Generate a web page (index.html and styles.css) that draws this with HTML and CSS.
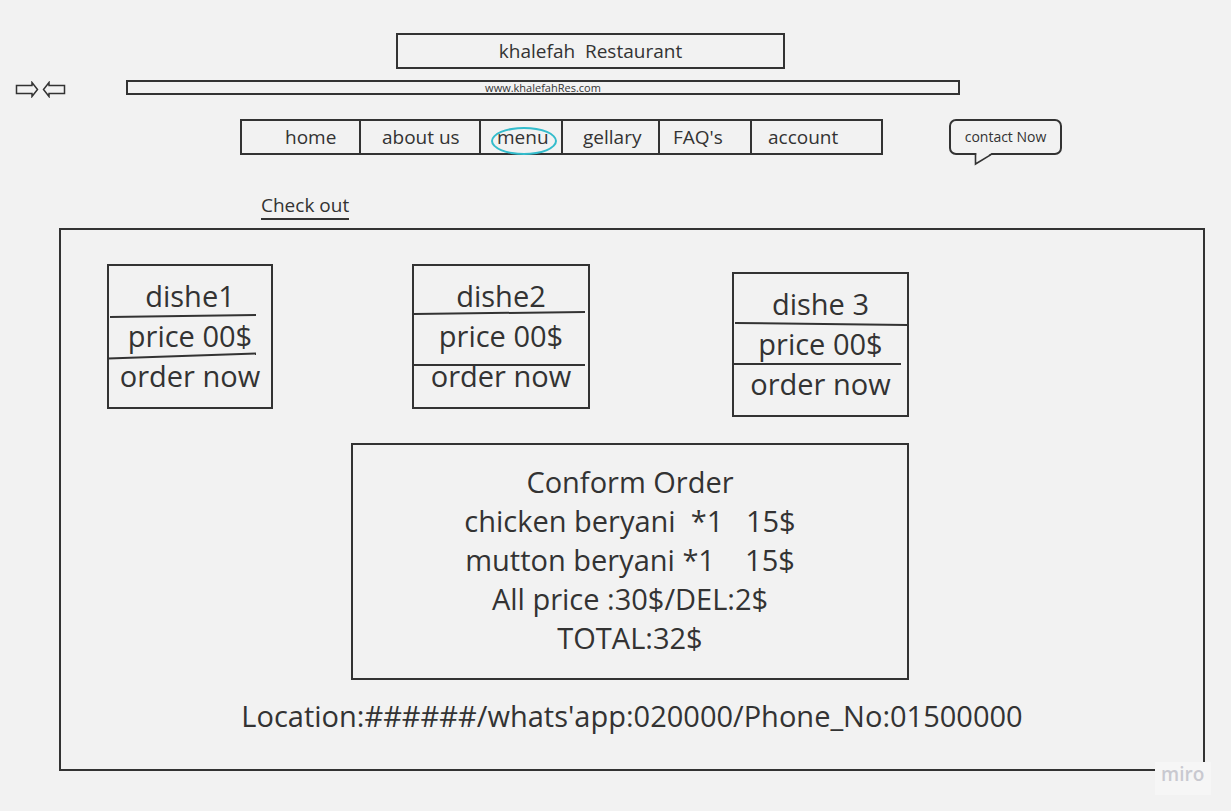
FILE: index.html
```html
<!DOCTYPE html>
<html lang="en">
<head>
    <meta charset="UTF-8">
    <meta name="viewport" content="width=device-width, initial-scale=1.0">
    <title>khalefah Restaurant - Check out</title>
    <link rel="stylesheet" href="styles.css">
</head>
<body>
    <div class="title-box">khalefah  Restaurant</div>

    <div class="address-row">
        <svg class="nav-arrows" width="52" height="17" viewBox="0 0 52 17">
            <path d="M1.5 4.5 H17 V1.5 L22.5 8.5 L17 15.5 V12.5 H1.5 Z"/>
            <path d="M49.5 4.5 H34 V1.5 L28.5 8.5 L34 15.5 V12.5 H49.5 Z"/>
        </svg>
        <div class="address-bar">www.khalefahRes.com</div>
    </div>

    <div class="nav-row">
        <nav class="main-nav">
            <a class="nav-item nav-home">home</a>
            <a class="nav-item nav-about">about us</a>
            <a class="nav-item nav-menu">menu</a>
            <a class="nav-item nav-gallery">gellary</a>
            <a class="nav-item nav-faq">FAQ's</a>
            <a class="nav-item nav-account">account</a>
        </nav>
        <div class="contact-bubble">
            contact Now
            <svg class="bubble-tail" width="20" height="14" viewBox="0 0 20 14">
                <polygon points="2.2,0 17.5,0 2.2,10.5" fill="#f2f2f2"/>
                <polyline points="1.5,0 1.5,11 17,1.6" fill="none" stroke="#333" stroke-width="1.6"/>
            </svg>
        </div>
    </div>

    <div class="checkout-row">
        <span class="checkout-title">Check out</span>
    </div>

    <div class="checkout-frame">
        <div class="dish-row">
            <div class="dish-card dish-one">
                <div class="dish-line">dishe1</div>
                <div class="dish-rule rule-a"></div>
                <div class="dish-line">price 00$</div>
                <div class="dish-rule rule-b"></div>
                <div class="dish-line">order now</div>
            </div>
            <div class="dish-card dish-two">
                <div class="dish-line">dishe2</div>
                <div class="dish-rule rule-c"></div>
                <div class="dish-line">price 00$</div>
                <div class="dish-rule rule-d"></div>
                <div class="dish-line">order now</div>
            </div>
            <div class="dish-card dish-three">
                <div class="dish-line">dishe 3</div>
                <div class="dish-rule rule-e"></div>
                <div class="dish-line">price 00$</div>
                <div class="dish-rule rule-f"></div>
                <div class="dish-line">order now</div>
            </div>
        </div>

        <div class="order-box">
            <div class="order-line">Conform Order</div>
            <div class="order-line">chicken beryani  *1   15$</div>
            <div class="order-line">mutton beryani *1    15$</div>
            <div class="order-line">All price :30$/DEL:2$</div>
            <div class="order-line">TOTAL:32$</div>
        </div>

        <div class="contact-line">Location:######/whats'app:020000/Phone_No:01500000</div>
    </div>

    <div class="miro-badge">miro</div>
</body>
</html>
```

FILE: styles.css
```css
* {
    box-sizing: border-box;
}

body {
    margin: 0;
    width: 1231px;
    height: 811px;
    overflow: hidden;
    position: relative;
    background: #f2f2f2;
    color: #333;
    font-family: "Open Sans", Arial, sans-serif;
}

/* header */

.title-box {
    margin: 33px 0 0 396px;
    width: 389px;
    height: 36px;
    border: 2px solid #333;
    font-size: 19px;
    line-height: 32px;
    text-align: center;
    white-space: pre;
}

.address-row {
    display: flex;
    align-items: flex-start;
    height: 15px;
    margin-top: 11px;
}

.nav-arrows {
    margin: 1px 0 0 15px;
    fill: none;
    stroke: #333;
    stroke-width: 1.5;
}

.address-bar {
    margin-left: 59px;
    width: 834px;
    height: 15px;
    border: 2px solid #333;
    font-size: 11px;
    line-height: 11px;
    text-align: center;
}

/* navigation */

.nav-row {
    display: flex;
    align-items: flex-start;
    margin-top: 24px;
}

.main-nav {
    margin-left: 240px;
    width: 643px;
    height: 36px;
    border: 2px solid #333;
    display: grid;
    grid-template-columns: 119px 120px 82px 97px 92px 1fr;
}

.nav-item {
    border-right: 2px solid #333;
    font-size: 19px;
    line-height: 33px;
    color: #333;
    text-decoration: none;
}

.nav-item:last-child {
    border-right: none;
}

.nav-home { padding-left: 43px; }
.nav-about { padding-left: 21px; }
.nav-gallery { padding-left: 20px; }
.nav-faq { padding-left: 13px; }
.nav-account { padding-left: 16px; }

.nav-menu {
    position: relative;
    padding-left: 16px;
}

.nav-menu::after {
    content: "";
    position: absolute;
    left: 10px;
    top: 6px;
    width: 62px;
    height: 24px;
    border: 2px solid #33bccc;
    border-radius: 50%;
}

.contact-bubble {
    position: relative;
    margin-left: 66px;
    width: 113px;
    height: 36px;
    border: 2px solid #333;
    border-radius: 7px;
    font-size: 14px;
    line-height: 32px;
    text-align: center;
}

.bubble-tail {
    position: absolute;
    left: 23px;
    top: 32px;
}

/* check out */

.checkout-row {
    display: flex;
    padding-left: 261px;
    margin-top: 37px;
}

.checkout-title {
    font-size: 19px;
    line-height: 26px;
    border-bottom: 2px solid #333;
}

.checkout-frame {
    margin: 8px 0 0 59px;
    width: 1146px;
    height: 543px;
    border: 2px solid #333;
}

.dish-row {
    display: flex;
    align-items: flex-start;
    gap: 139px;
    margin-top: 34px;
    padding-left: 46px;
}

.dish-card {
    border: 2px solid #333;
    padding: 11px 0 12px;
    font-size: 29px;
    line-height: 38px;
    text-align: center;
}

.dish-one { width: 166px; }
.dish-two { width: 178px; }

.dish-three {
    width: 177px;
    margin: 8px 0 0 3px;
}

.dish-rule {
    height: 2px;
    background: #333;
}

.rule-a {
    margin: 0 15px 0 1px;
    transform: rotate(-0.8deg);
}

.rule-b {
    margin: 0 15px 0 -1px;
    transform: rotate(-1.9deg);
}

.rule-c {
    margin-right: 3px;
    transform: translateY(-3px) rotate(-0.7deg);
}

.rule-d {
    margin-right: 3px;
    transform: translateY(9px);
}

.rule-e {
    margin: 0 0 0 1px;
    transform: rotate(0.7deg);
}

.rule-f {
    margin: 0 6px 0 -1px;
}

.order-box {
    margin: 26px 0 0 290px;
    width: 558px;
    height: 237px;
    border: 2px solid #333;
    padding-top: 17px;
    font-size: 29px;
    line-height: 39px;
    text-align: center;
}

.order-line {
    white-space: pre;
}

.contact-line {
    margin-top: 17px;
    font-size: 29px;
    line-height: 38px;
    text-align: center;
}

.miro-badge {
    position: absolute;
    left: 1155px;
    top: 762px;
    width: 56px;
    height: 33px;
    padding: 0 6px;
    background: #f6f6f6;
    color: #c9c9d0;
    font-size: 19px;
    font-weight: 600;
    line-height: 25px;
}
```
